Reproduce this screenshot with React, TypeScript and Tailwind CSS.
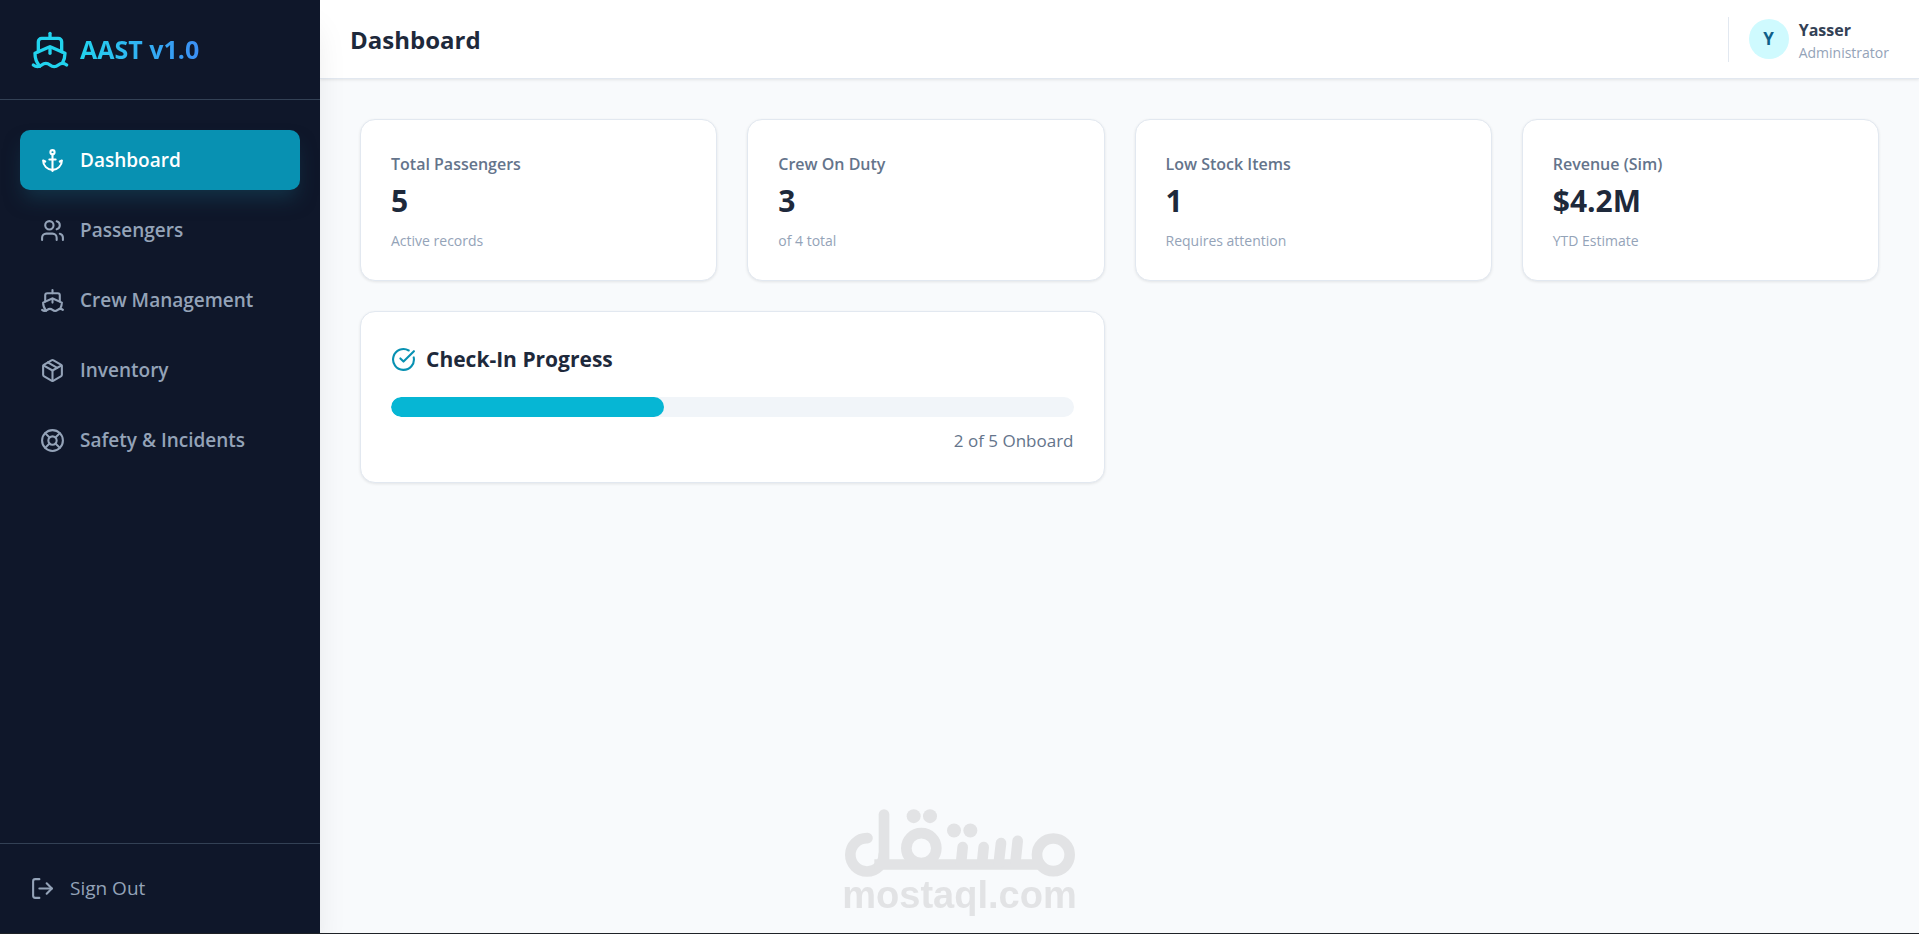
import React from "react";
import {
  Anchor,
  CircleCheckBig,
  LifeBuoy,
  LogOut,
  Package,
  Ship,
  Users,
} from "lucide-react";
import clsx from "clsx";

const navItems = [
  { label: "Dashboard", icon: Anchor },
  { label: "Passengers", icon: Users },
  { label: "Crew Management", icon: Ship },
  { label: "Inventory", icon: Package },
  { label: "Safety & Incidents", icon: LifeBuoy },
];

const stats = [
  { label: "Total Passengers", value: "5", note: "Active records" },
  { label: "Crew On Duty", value: "3", note: "of 4 total" },
  { label: "Low Stock Items", value: "1", note: "Requires attention" },
  { label: "Revenue (Sim)", value: "$4.2M", note: "YTD Estimate" },
];

const checkIn = { onboard: 2, total: 5 };

const Card = ({
  className,
  children,
}: {
  className?: string;
  children: React.ReactNode;
}) => (
  <div
    className={clsx(
      "rounded-[15px] border border-[#e2e8f0] bg-white p-[30px] shadow-[0_1px_3px_rgba(0,0,0,0.09)]",
      className
    )}
  >
    {children}
  </div>
);

const Sidebar = ({ active }: { active: string }) => (
  <aside className="relative z-10 flex w-80 shrink-0 flex-col bg-[#0f172a] shadow-[0_25px_31px_-6px_rgba(0,0,0,0.1)]">
    <div className="flex h-[100px] items-center gap-[10px] border-b border-[#334155] px-[30px]">
      <Ship size={40} className="text-[#22d3ee]" />
      <span className="bg-gradient-to-r from-[#22d3ee] to-[#3b8ff5] bg-clip-text text-[25px] leading-[35px] font-bold text-transparent">
        AAST v1.0
      </span>
    </div>

    <nav className="flex flex-1 flex-col gap-[10px] px-5 py-[30px]">
      {navItems.map(({ label, icon: Icon }) => (
        <button
          key={label}
          type="button"
          className={clsx(
            "flex h-[60px] items-center gap-[15px] rounded-[10px] px-5 text-[19px] leading-[30px] font-semibold",
            label === active
              ? "bg-[#0891b2] text-white shadow-[0_12px_19px_-4px_rgba(22,78,99,0.5)]"
              : "text-[#94a3b8]"
          )}
        >
          <Icon size={25} />
          {label}
        </button>
      ))}
    </nav>

    <div className="border-t border-[#334155] p-5">
      <button
        type="button"
        className="flex w-full items-center gap-[15px] p-[10px] text-[19px] leading-[29px] text-[#94a3b8]"
      >
        <LogOut size={25} />
        Sign Out
      </button>
    </div>
  </aside>
);

const Header = ({ title }: { title: string }) => (
  <header className="flex h-[79px] items-center justify-between border-b border-[#e2e8f0] bg-white px-[30px] shadow-[0_1px_3px_rgba(0,0,0,0.09)]">
    <h1 className="text-[24px] leading-[35px] font-bold text-[#1e293b]">
      {title}
    </h1>
    <div className="flex items-center gap-[10px] border-l border-[#e2e8f0] pl-5">
      <div className="flex size-10 items-center justify-center rounded-full bg-[#cffafe] text-[17px] font-bold text-[#0f5f88]">
        Y
      </div>
      <div>
        <p className="text-[16px] leading-[27px] font-bold text-[#334155]">
          Yasser
        </p>
        <p className="text-[14px] leading-[18px] text-[#94a3b8]">
          Administrator
        </p>
      </div>
    </div>
  </header>
);

// Brand mark built from rings, dots and bars with the domain under it
const Watermark = () => (
  <div className="pointer-events-none fixed inset-x-0 bottom-5 z-20 flex flex-col items-center text-[#e2e3e5]">
    <svg
      viewBox="72 57 690 203"
      className="h-[68px] w-[230px]"
      fill="none"
      stroke="currentColor"
      strokeWidth={32}
      strokeLinecap="round"
      aria-hidden="true"
    >
      <circle cx={138} cy={194} r={50} strokeDasharray="235.6 400" />
      <line x1={189} y1={73} x2={189} y2={210} />
      <line x1={160} y1={223} x2={665} y2={223} strokeLinecap="butt" />
      <circle cx={301} cy={174} r={45} />
      <circle cx={697} cy={194} r={49} />
      <line x1={425} y1={171} x2={420} y2={220} />
      <line x1={488} y1={171} x2={483} y2={220} />
      <line x1={540} y1={159} x2={533} y2={220} />
      <line x1={590} y1={152} x2={583} y2={220} />
      <g fill="currentColor" stroke="none">
        <circle cx={278} cy={78} r={21} />
        <circle cx={327} cy={78} r={21} />
        <circle cx={399} cy={121} r={21} />
        <circle cx={448} cy={121} r={21} />
      </g>
    </svg>
    <span className="font-['Liberation_Sans',sans-serif] text-[38px] leading-[37px] font-bold">
      mostaql.com
    </span>
  </div>
);

const App: React.FC = () => {
  const percent = (checkIn.onboard / checkIn.total) * 100;

  return (
    <div className="flex min-h-screen border-b border-[#1f2328] bg-[#f8fafc] font-['Open_Sans','Noto_Sans',sans-serif]">
      <Sidebar active="Dashboard" />

      <div className="flex min-w-0 flex-1 flex-col">
        <Header title="Dashboard" />

        <main className="grid grid-cols-4 gap-[30px] p-10">
          {stats.map((stat) => (
            <Card key={stat.label}>
              <p className="text-[16px] leading-[28px] font-semibold text-[#64748b]">
                {stat.label}
              </p>
              <p className="mt-1 text-[30px] leading-[38px] font-bold text-[#1e293b]">
                {stat.value}
              </p>
              <p className="mt-3 text-[14px] leading-[18px] text-[#94a3b8]">
                {stat.note}
              </p>
            </Card>
          ))}

          <Card className="col-span-2">
            <h2 className="mb-5 flex items-center gap-[10px] text-[21px] leading-[35px] font-bold text-[#1e293b]">
              <CircleCheckBig size={25} className="text-[#0891b2]" />
              Check-In Progress
            </h2>
            <div className="h-5 overflow-hidden rounded-full bg-[#f1f5f9]">
              <div
                className="h-full rounded-full bg-[#06b6d4]"
                style={{ width: `${percent}%` }}
              />
            </div>
            <p className="mt-3 text-right text-[17px] leading-[23px] text-[#64748b]">
              {checkIn.onboard} of {checkIn.total} Onboard
            </p>
          </Card>
        </main>
      </div>

      <Watermark />
    </div>
  );
};

export default App;
